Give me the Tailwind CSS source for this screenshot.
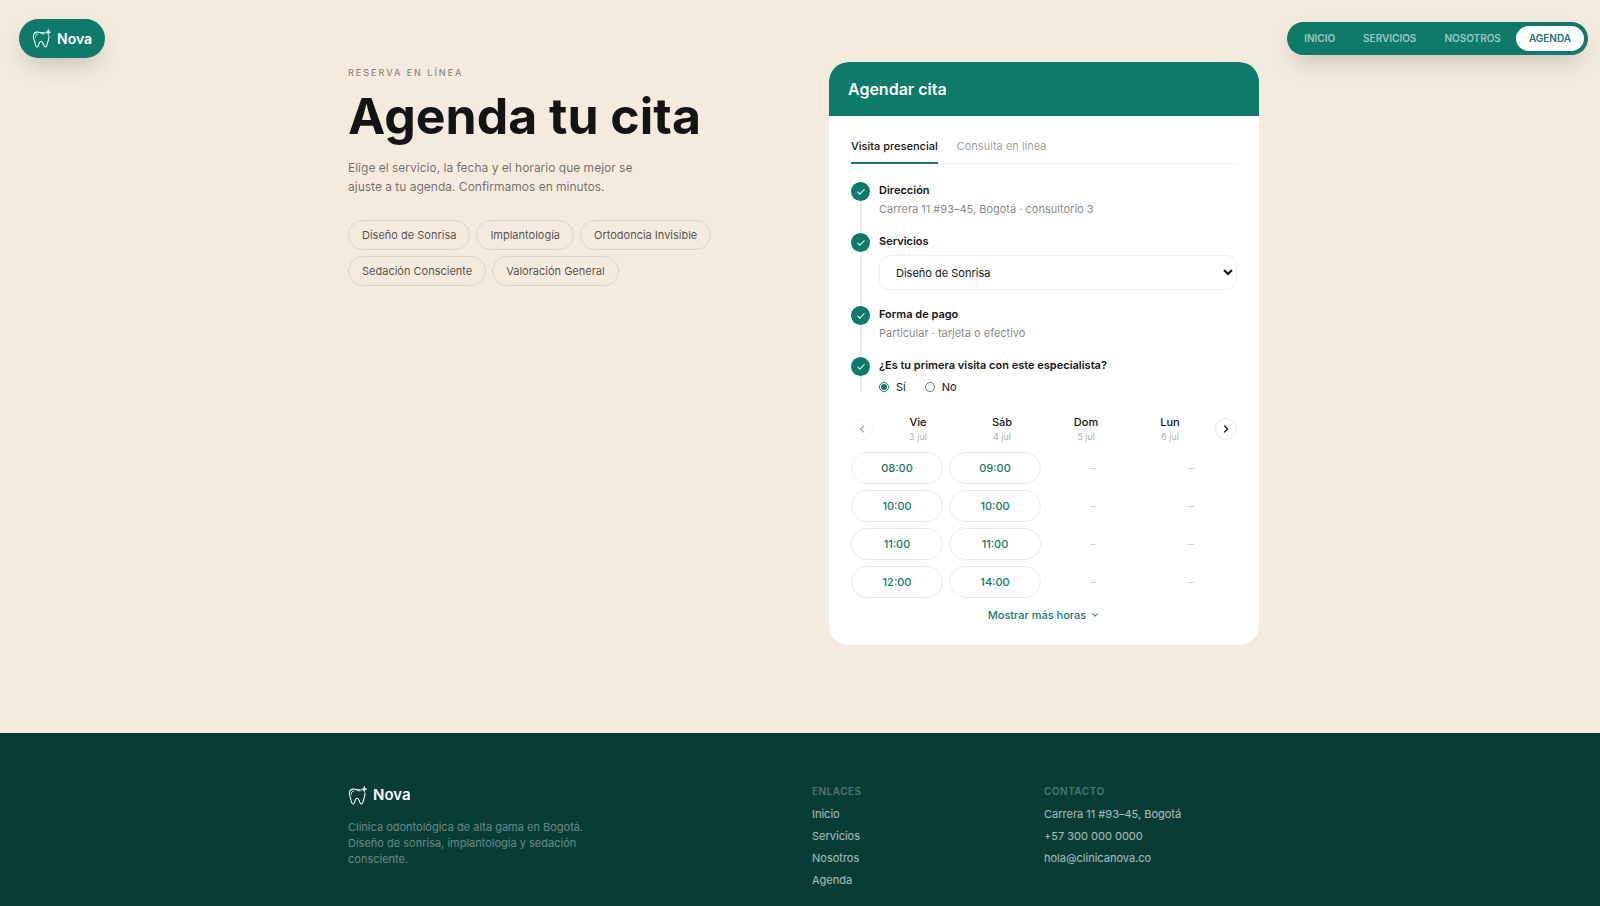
<!DOCTYPE html>
<html lang="es">
<head>
<meta charset="utf-8">
<title>Nova · Agenda tu cita</title>
<script src="https://cdn.jsdelivr.net/npm/@tailwindcss/browser@4"></script>
</head>
<body class="flex min-h-screen flex-col bg-[#f5eade] font-[Inter,sans-serif] text-[11px] leading-4 text-[#141414]">

<svg class="hidden">
  <symbol id="tooth" viewBox="0 0 24 24" fill="none" stroke="currentColor" stroke-linecap="round" stroke-linejoin="round">
    <path stroke-width="1.3" d="M17 5.2C14.800 4.300 13 5.500 10.500 4.500C7.500 3.200 3.500 3.500 2 7C.8 10.500 2.600 13 3.400 16C4 18.500 4.500 22.800 6.500 22.800C9 22.800 8 15.500 11.500 15.500C15 15.500 14 22.800 16.800 22.800C18.800 22.800 19.200 19 20 16C20.800 13.500 22 11.500 21.300 8.600"/>
    <path stroke-width="1" d="M7.500 6.200C5 6.400 4 8 4.300 10.500M10.500 4.700C12 6 13.500 6.400 15 6.200"/>
    <path fill="currentColor" stroke-width=".7" d="M20.500 .5C20.900 3 21.500 3.600 24 4C21.500 4.400 20.900 5 20.500 7.500C20.100 5 19.500 4.400 17 4C19.500 3.600 20.100 3 20.500 .5Z"/>
  </symbol>
  <symbol id="check" viewBox="0 0 24 24" fill="none" stroke="currentColor" stroke-width="2.500" stroke-linecap="round" stroke-linejoin="round">
    <path d="M20 6 9 17l-5-5"/>
  </symbol>
</svg>

<header class="absolute inset-x-0 top-0 flex items-center justify-between pt-[19px] pr-3 pl-[19px]">
  <a href="#" class="flex h-[39px] items-center gap-[6px] rounded-full bg-[#0d7a6a] px-[13px] text-[14px] font-semibold text-white shadow-[0_10px_24px_-6px_rgba(0,0,0,0.22)]">
    <svg class="size-[19px]"><use href="#tooth"/></svg>Nova
  </a>
  <nav class="flex gap-[2px] rounded-full bg-[#0d7a6a] p-1 text-[10px] leading-[25px] font-semibold text-white/60 shadow-[0_10px_24px_-6px_rgba(0,0,0,0.22)]">
    <a href="#" class="px-[13px]">INICIO</a>
    <a href="#" class="px-[13px]">SERVICIOS</a>
    <a href="#" class="px-[13px]">NOSOTROS</a>
    <a href="#" class="rounded-full bg-white px-[13px] text-[#0d7a6a]">AGENDA</a>
  </nav>
</header>

<main class="mx-auto grid w-full max-w-[918px] grid-cols-[1fr_430px] items-start gap-[104px] pt-[62px] pb-[88px] pl-[7px]">
  <section class="pt-1">
    <p class="text-[9px] leading-[14px] font-medium tracking-[2px] text-[#141414]/50">RESERVA EN LÍNEA</p>
    <h1 class="mt-[9px] text-[50px] leading-[54px] font-bold whitespace-nowrap">Agenda tu cita</h1>
    <p class="mt-[15px] max-w-[300px] text-[12px] leading-[19px] text-[#141414]/60">Elige el servicio, la fecha y el horario que mejor se ajuste a tu agenda. Confirmamos en minutos.</p>
    <ul class="mt-6 flex flex-wrap gap-[6px] text-[#141414]/75">
      <li class="rounded-full border border-[#141414]/10 px-[13px] py-[6px]">Diseño de Sonrisa</li>
      <li class="rounded-full border border-[#141414]/10 px-[13px] py-[6px]">Implantología</li>
      <li class="rounded-full border border-[#141414]/10 px-[13px] py-[6px]">Ortodoncia Invisible</li>
      <li class="rounded-full border border-[#141414]/10 px-[13px] py-[6px]">Sedación Consciente</li>
      <li class="rounded-full border border-[#141414]/10 px-[13px] py-[6px]">Valoración General</li>
    </ul>
  </section>

  <section class="overflow-hidden rounded-[20px] bg-white">
    <h2 class="bg-[#0d7a6a] px-[19px] py-[15px] text-[16px] leading-6 font-semibold text-white">Agendar cita</h2>
    <form class="px-[22px] pt-[22px] pb-[22px]">
      <div class="flex gap-[19px] border-b border-[#f3f3f3]">
        <button type="button" class="-mb-px border-b-2 border-[#0d7a6a] pb-2 font-medium">Visita presencial</button>
        <button type="button" class="-mb-px border-b-2 border-transparent pb-2 text-[#141414]/45">Consulta en línea</button>
      </div>

      <ol class="mt-[18px]">
        <li class="flex gap-[9px]">
          <div class="flex flex-col items-center">
            <span class="flex size-[19px] items-center justify-center rounded-full bg-[#0d7a6a] text-white"><svg class="size-[10px]"><use href="#check"/></svg></span>
            <span class="w-[2px] grow bg-[#ebebeb]"></span>
          </div>
          <div class="pb-4">
            <h3 class="font-semibold">Dirección</h3>
            <p class="mt-[3px] text-[#141414]/55">Carrera 11 #93–45, Bogotá · consultorio 3</p>
          </div>
        </li>
        <li class="flex gap-[9px]">
          <div class="flex flex-col items-center">
            <span class="flex size-[19px] items-center justify-center rounded-full bg-[#0d7a6a] text-white"><svg class="size-[10px]"><use href="#check"/></svg></span>
            <span class="w-[2px] grow bg-[#ebebeb]"></span>
          </div>
          <div class="grow pb-4">
            <label for="servicio" class="block font-semibold">Servicios</label>
            <select id="servicio" class="mt-[6px] block h-[35px] w-full rounded-[10px] border border-[#ededed] bg-white px-3">
              <option>Diseño de Sonrisa</option>
              <option>Implantología</option>
              <option>Ortodoncia Invisible</option>
              <option>Sedación Consciente</option>
              <option>Valoración General</option>
            </select>
          </div>
        </li>
        <li class="flex gap-[9px]">
          <div class="flex flex-col items-center">
            <span class="flex size-[19px] items-center justify-center rounded-full bg-[#0d7a6a] text-white"><svg class="size-[10px]"><use href="#check"/></svg></span>
            <span class="w-[2px] grow bg-[#ebebeb]"></span>
          </div>
          <div class="pb-4">
            <h3 class="font-semibold">Forma de pago</h3>
            <p class="mt-[3px] text-[#141414]/55">Particular · tarjeta o efectivo</p>
          </div>
        </li>
        <li class="flex gap-[9px]">
          <div class="flex flex-col items-center">
            <span class="flex size-[19px] items-center justify-center rounded-full bg-[#0d7a6a] text-white"><svg class="size-[10px]"><use href="#check"/></svg></span>
            <span class="w-[2px] grow bg-[#ebebeb]"></span>
          </div>
          <fieldset>
            <legend class="font-semibold">¿Es tu primera visita con este especialista?</legend>
            <div class="mt-2 flex gap-[19px] leading-3">
              <label class="flex items-center gap-[7px]"><input type="radio" name="primera" checked class="size-[10px] accent-[#0d7a6a]">Sí</label>
              <label class="flex items-center gap-[7px]"><input type="radio" name="primera" class="size-[10px] accent-[#0d7a6a]">No</label>
            </div>
          </fieldset>
        </li>
      </ol>

      <div class="mt-[21px] flex items-center gap-[3px]">
        <button type="button" disabled aria-label="Días anteriores" class="flex size-[22px] items-center justify-center rounded-full border border-[#e6e6e6] opacity-35">
          <svg class="size-3" viewBox="0 0 24 24" fill="none" stroke="currentColor" stroke-width="2.500" stroke-linecap="round" stroke-linejoin="round"><path d="m15 18-6-6 6-6"/></svg>
        </button>
        <div class="grid grow grid-cols-4 text-center">
          <div><p class="font-medium">Vie</p><p class="text-[9px] leading-[13px] text-[#141414]/40">3 jul</p></div>
          <div><p class="font-medium">Sáb</p><p class="text-[9px] leading-[13px] text-[#141414]/40">4 jul</p></div>
          <div><p class="font-medium">Dom</p><p class="text-[9px] leading-[13px] text-[#141414]/40">5 jul</p></div>
          <div><p class="font-medium">Lun</p><p class="text-[9px] leading-[13px] text-[#141414]/40">6 jul</p></div>
        </div>
        <button type="button" aria-label="Días siguientes" class="flex size-[22px] items-center justify-center rounded-full border border-[#e6e6e6]">
          <svg class="size-3" viewBox="0 0 24 24" fill="none" stroke="currentColor" stroke-width="2.500" stroke-linecap="round" stroke-linejoin="round"><path d="m9 18 6-6-6-6"/></svg>
        </button>
      </div>

      <div class="mt-[9px] grid auto-rows-[32px] grid-cols-4 gap-[6px] text-center font-medium text-[#0d7a6a]">
        <button type="button" class="rounded-full border border-[#dfeeeb]">08:00</button>
        <button type="button" class="rounded-full border border-[#dfeeeb]">09:00</button>
        <span class="self-center font-normal text-[#141414]/25">–</span>
        <span class="self-center font-normal text-[#141414]/25">–</span>
        <button type="button" class="rounded-full border border-[#dfeeeb]">10:00</button>
        <button type="button" class="rounded-full border border-[#dfeeeb]">10:00</button>
        <span class="self-center font-normal text-[#141414]/25">–</span>
        <span class="self-center font-normal text-[#141414]/25">–</span>
        <button type="button" class="rounded-full border border-[#dfeeeb]">11:00</button>
        <button type="button" class="rounded-full border border-[#dfeeeb]">11:00</button>
        <span class="self-center font-normal text-[#141414]/25">–</span>
        <span class="self-center font-normal text-[#141414]/25">–</span>
        <button type="button" class="rounded-full border border-[#dfeeeb]">12:00</button>
        <button type="button" class="rounded-full border border-[#dfeeeb]">14:00</button>
        <span class="self-center font-normal text-[#141414]/25">–</span>
        <span class="self-center font-normal text-[#141414]/25">–</span>
      </div>

      <button type="button" class="mx-auto mt-[9px] flex items-center gap-1 font-medium text-[#0d7a6a]">Mostrar más horas
        <svg class="size-[10px]" viewBox="0 0 24 24" fill="none" stroke="currentColor" stroke-width="2.500" stroke-linecap="round" stroke-linejoin="round"><path d="m6 9 6 6 6-6"/></svg>
      </button>
    </form>
  </section>
</main>

<footer class="grow bg-[#083d36] pt-[51px] text-white/65">
  <div class="mx-auto grid w-full max-w-[952px] grid-cols-4 pl-6">
    <div class="col-span-2">
      <a href="#" class="flex items-center gap-[6px] text-[15px] leading-[22px] font-semibold text-white"><svg class="size-[19px]"><use href="#tooth"/></svg>Nova</a>
      <p class="mt-[13px] max-w-[250px] text-white/40">Clínica odontológica de alta gama en Bogotá. Diseño de sonrisa, implantología y sedación consciente.</p>
    </div>
    <div>
      <h4 class="text-[10px] leading-[14px] font-semibold tracking-wider text-white/30">ENLACES</h4>
      <ul class="mt-2 flex flex-col gap-[6px]">
        <li><a href="#">Inicio</a></li>
        <li><a href="#">Servicios</a></li>
        <li><a href="#">Nosotros</a></li>
        <li><a href="#">Agenda</a></li>
      </ul>
    </div>
    <div>
      <h4 class="text-[10px] leading-[14px] font-semibold tracking-wider text-white/30">CONTACTO</h4>
      <ul class="mt-2 flex flex-col gap-[6px]">
        <li>Carrera 11 #93–45, Bogotá</li>
        <li>+57 300 000 0000</li>
        <li>hola@clinicanova.co</li>
      </ul>
    </div>
  </div>
</footer>
</body>
</html>
